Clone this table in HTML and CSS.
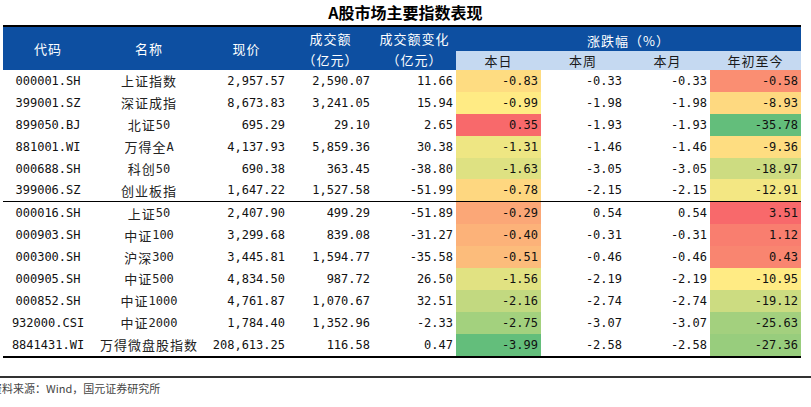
FILE: index.html
```html
<!DOCTYPE html>
<html lang="zh-CN">
<head>
<meta charset="utf-8">
<title>A股市场主要指数表现</title>
<link rel="stylesheet" href="styles.css">
</head>
<body>
<div class="title">A股市场主要指数表现</div>
<div class="table">
  <div class="thead">
    <div class="th span2">代码</div>
    <div class="th span2">名称</div>
    <div class="th span2">现价</div>
    <div class="th span2">成交额<br>（亿元）</div>
    <div class="th span2">成交额变化<br>（亿元）</div>
    <div class="th group">涨跌幅（%）</div>
    <div class="sub">本日</div>
    <div class="sub">本周</div>
    <div class="sub">本月</div>
    <div class="sub">年初至今</div>
  </div>
  <div class="tbody">
    <div class="row"><div class="c">000001.SH</div><div class="n">上证指数</div><div class="v">2,957.57</div><div class="v">2,590.07</div><div class="v">11.66</div><div class="v" style="background:#FEDC81">-0.83</div><div class="v">-0.33</div><div class="v">-0.33</div><div class="v" style="background:#FA8E72">-0.58</div></div>
    <div class="row"><div class="c">399001.SZ</div><div class="n">深证成指</div><div class="v">8,673.83</div><div class="v">3,241.05</div><div class="v">15.94</div><div class="v" style="background:#FFEB84">-0.99</div><div class="v">-1.98</div><div class="v">-1.98</div><div class="v" style="background:#FED980">-8.93</div></div>
    <div class="row"><div class="c">899050.BJ</div><div class="n">北证<span class="d">50</span></div><div class="v">695.29</div><div class="v">29.10</div><div class="v">2.65</div><div class="v" style="background:#F8696B">0.35</div><div class="v">-1.93</div><div class="v">-1.93</div><div class="v" style="background:#63BE7B">-35.78</div></div>
    <div class="row"><div class="c">881001.WI</div><div class="n">万得全<span class="d">A</span></div><div class="v">4,137.93</div><div class="v">5,859.36</div><div class="v">30.38</div><div class="v" style="background:#EEE683">-1.31</div><div class="v">-1.46</div><div class="v">-1.46</div><div class="v" style="background:#FEDD81">-9.36</div></div>
    <div class="row"><div class="c">000688.SH</div><div class="n">科创<span class="d">50</span></div><div class="v">690.38</div><div class="v">363.45</div><div class="v">-38.80</div><div class="v" style="background:#DEE182">-1.63</div><div class="v">-3.05</div><div class="v">-3.05</div><div class="v" style="background:#CDDC81">-18.97</div></div>
    <div class="row"><div class="c">399006.SZ</div><div class="n">创业板指</div><div class="v">1,647.22</div><div class="v">1,527.58</div><div class="v">-51.99</div><div class="v" style="background:#FED780">-0.78</div><div class="v">-2.15</div><div class="v">-2.15</div><div class="v" style="background:#F3E783">-12.91</div></div>
    <div class="row sep"><div class="c">000016.SH</div><div class="n">上证<span class="d">50</span></div><div class="v">2,407.90</div><div class="v">499.29</div><div class="v">-51.89</div><div class="v" style="background:#FBA777">-0.29</div><div class="v">0.54</div><div class="v">0.54</div><div class="v" style="background:#F8696B">3.51</div></div>
    <div class="row"><div class="c">000903.SH</div><div class="n">中证<span class="d">100</span></div><div class="v">3,299.68</div><div class="v">839.08</div><div class="v">-31.27</div><div class="v" style="background:#FCB279">-0.40</div><div class="v">-0.31</div><div class="v">-0.31</div><div class="v" style="background:#F97E6F">1.12</div></div>
    <div class="row"><div class="c">000300.SH</div><div class="n">沪深<span class="d">300</span></div><div class="v">3,445.81</div><div class="v">1,594.77</div><div class="v">-35.58</div><div class="v" style="background:#FCBC7B">-0.51</div><div class="v">-0.46</div><div class="v">-0.46</div><div class="v" style="background:#F98570">0.43</div></div>
    <div class="row"><div class="c">000905.SH</div><div class="n">中证<span class="d">500</span></div><div class="v">4,834.50</div><div class="v">987.72</div><div class="v">26.50</div><div class="v" style="background:#E1E282">-1.56</div><div class="v">-2.19</div><div class="v">-2.19</div><div class="v" style="background:#FFEB84">-10.95</div></div>
    <div class="row"><div class="c">000852.SH</div><div class="n">中证<span class="d">1000</span></div><div class="v">4,761.87</div><div class="v">1,070.67</div><div class="v">32.51</div><div class="v" style="background:#C2D980">-2.16</div><div class="v">-2.74</div><div class="v">-2.74</div><div class="v" style="background:#CCDC81">-19.12</div></div>
    <div class="row"><div class="c">932000.CSI</div><div class="n">中证<span class="d">2000</span></div><div class="v">1,784.40</div><div class="v">1,352.96</div><div class="v">-2.33</div><div class="v" style="background:#A3D17E">-2.75</div><div class="v">-3.07</div><div class="v">-3.07</div><div class="v" style="background:#A3D07E">-25.63</div></div>
    <div class="row"><div class="c">8841431.WI</div><div class="n">万得微盘股指数</div><div class="v">208,613.25</div><div class="v">116.58</div><div class="v">0.47</div><div class="v" style="background:#63BE7B">-3.99</div><div class="v">-2.58</div><div class="v">-2.58</div><div class="v" style="background:#98CD7D">-27.36</div></div>
  </div>
</div>
<div class="footer">资料来源：Wind，国元证券研究所</div>
</body>
</html>
```
FILE: styles.css
```css
html, body {
  margin: 0;
  padding: 0;
  background: #fff;
}
body {
  width: 811px;
  height: 407px;
  overflow: hidden;
  font-family: "Noto Sans CJK SC", sans-serif;
  color: #1a1a1a;
}
.title {
  height: 25px;
  line-height: 25px;
  text-align: center;
  font-size: 16px;
  font-weight: 700;
  color: #000;
}
.table {
  margin-left: 3px;
  width: 798px;
  border-top: 2px solid #000;
  border-bottom: 2px solid #000;
}
.thead {
  display: grid;
  grid-template-columns: 90px 112px 83px 85px 83px 85px 84px 85px 91px;
  grid-template-rows: 24px 19px;
  background: #0d4fa1;
}
.th {
  color: #fff;
  font-size: 13px;
  letter-spacing: 1px;
  display: flex;
  align-items: center;
  justify-content: center;
  text-align: center;
  line-height: 21px;
}
.span2 {
  grid-row: span 2;
}
.group {
  grid-column: span 4;
  padding-top: 2px;
}
.sub {
  background: #c5d9f1;
  color: #1a1a1a;
  font-size: 13px;
  letter-spacing: 1px;
  display: flex;
  align-items: center;
  justify-content: center;
}
.row {
  display: grid;
  grid-template-columns: 90px 112px 83px 85px 83px 85px 84px 85px 91px;
  height: 21.9px;
}
.row.sep {
  border-top: 1px solid #000;
}
.row > div {
  display: flex;
  align-items: center;
  font-family: "DejaVu Sans Mono", monospace;
  font-size: 12px;
  color: #111;
}
.c {
  justify-content: center;
}
.row > .n {
  justify-content: center;
  font-family: "Noto Sans CJK SC", sans-serif;
  font-size: 13px;
  letter-spacing: 1px;
  color: #222;
}
.d {
  font-family: "DejaVu Sans Mono", monospace;
  font-size: 12px;
  letter-spacing: 0;
}
.v {
  justify-content: flex-end;
  padding-right: 3px;
}
.footer {
  margin-top: 18px;
  border-top: 2px solid #333;
  padding-top: 3px;
  font-size: 11px;
  line-height: 15px;
  color: #444;
  text-indent: -9px;
  white-space: nowrap;
}
```
